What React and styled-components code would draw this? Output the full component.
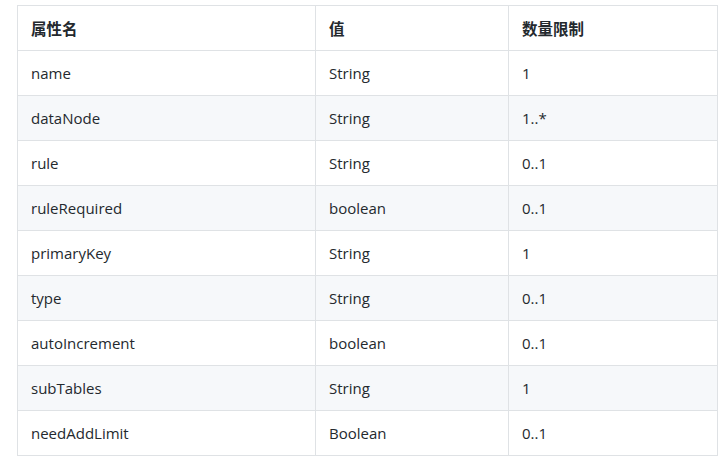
import React from "react";
import styled, { createGlobalStyle } from "styled-components";

const Global = createGlobalStyle`
  html, body { margin: 0; padding: 0; background: #fff; }
  body { font-family: "Open Sans", "Noto Sans CJK SC", sans-serif; color: #24292e; }
`;

const Wrap = styled.div`
  padding: 5px 0 0 17px;
`;

const Table = styled.table`
  border-collapse: collapse;
  border-spacing: 0;
  table-layout: fixed;
  width: 700px;
  font-size: 15px;
`;

const Row = styled.tr`
  background: ${(p) => (p.$stripe ? "#f6f8fa" : "#fff")};
`;

const Th = styled.th`
  border: 1px solid #dfe2e5;
  height: 45px;
  padding: 0 13px;
  text-align: left;
  font-weight: 700;
  font-family: "Noto Sans CJK SC", sans-serif;
  font-size: 15.5px;
  color: #24292e;
  box-sizing: border-box;
`;

const Td = styled.td`
  border: 1px solid #dfe2e5;
  height: 45px;
  padding: 0 13px;
  box-sizing: border-box;
  color: #24292e;
`;

const rows = [
  ["name", "String", "1"],
  ["dataNode", "String", "1..*"],
  ["rule", "String", "0..1"],
  ["ruleRequired", "boolean", "0..1"],
  ["primaryKey", "String", "1"],
  ["type", "String", "0..1"],
  ["autoIncrement", "boolean", "0..1"],
  ["subTables", "String", "1"],
  ["needAddLimit", "Boolean", "0..1"],
];

export default function App() {
  return (
    <>
      <Global />
      <Wrap>
        <Table>
          <colgroup>
            <col style={{ width: 298 }} />
            <col style={{ width: 193 }} />
            <col style={{ width: 209 }} />
          </colgroup>
          <thead>
            <Row>
              <Th>属性名</Th>
              <Th>值</Th>
              <Th>数量限制</Th>
            </Row>
          </thead>
          <tbody>
            {rows.map((r, i) => (
              <Row key={r[0]} $stripe={i % 2 === 1}>
                <Td>{r[0]}</Td>
                <Td>{r[1]}</Td>
                <Td>{r[2]}</Td>
              </Row>
            ))}
          </tbody>
        </Table>
      </Wrap>
    </>
  );
}
